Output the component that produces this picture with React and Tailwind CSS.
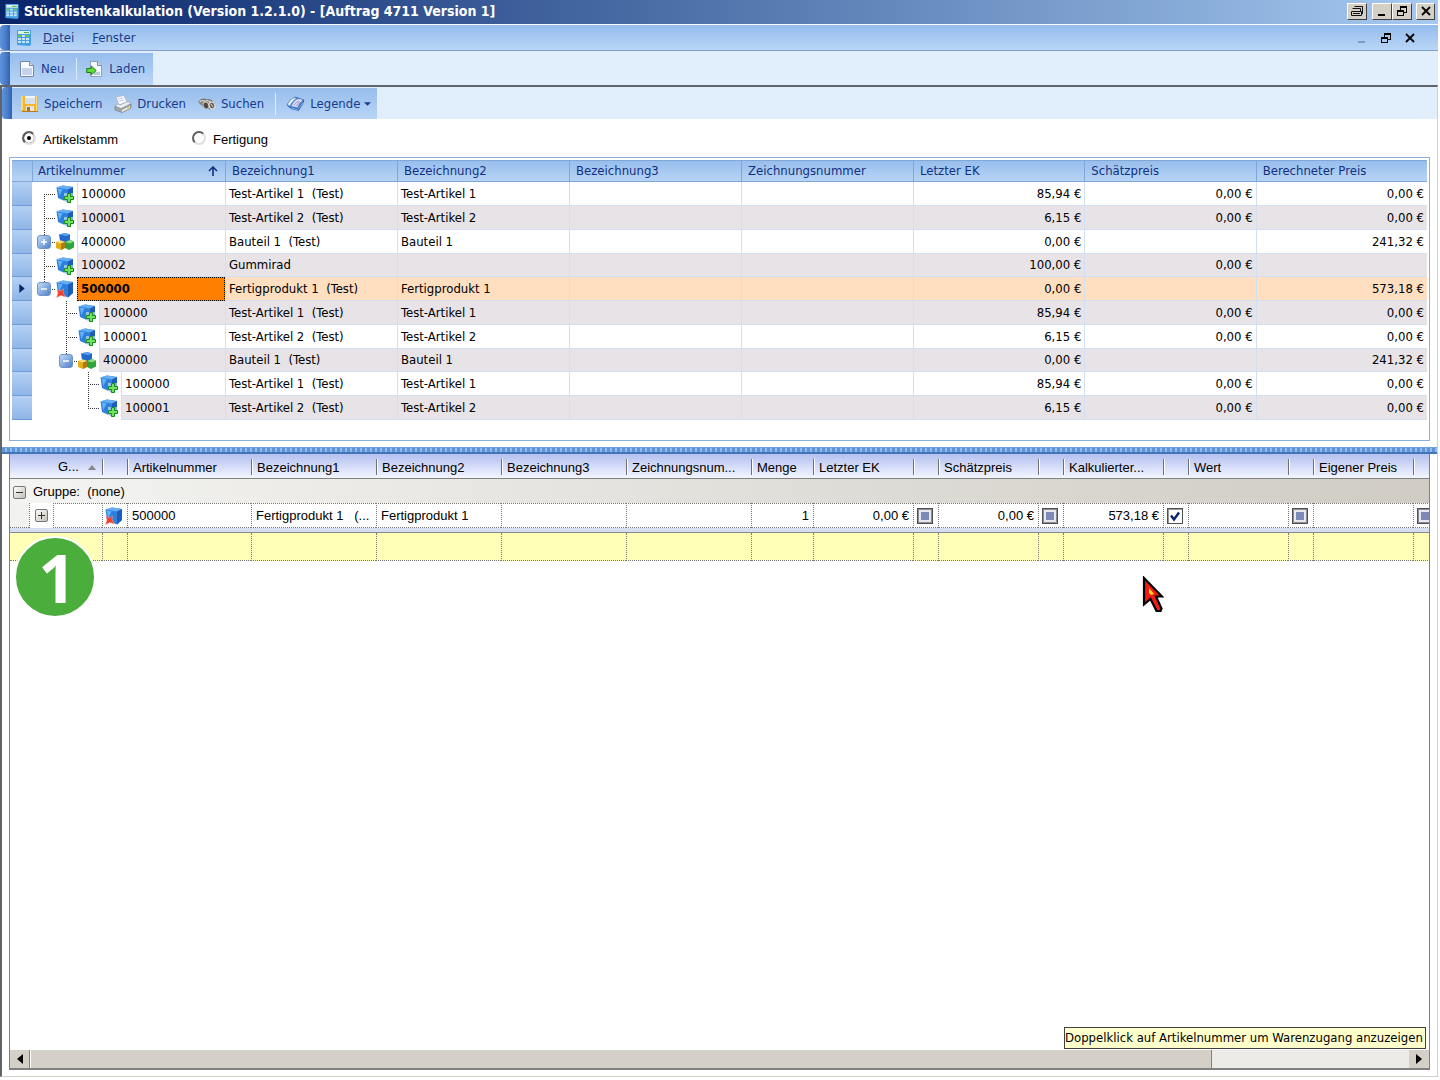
import React, { useState } from 'react';

const treeRows = [
  { level: 0, icon: 'cube', nr: '100000', b1: 'Test-Artikel 1  (Test)', b2: 'Test-Artikel 1', ek: '85,94 €', sp: '0,00 €', bp: '0,00 €', line: 'first' },
  { level: 0, icon: 'cube', nr: '100001', b1: 'Test-Artikel 2  (Test)', b2: 'Test-Artikel 2', ek: '6,15 €', sp: '0,00 €', bp: '0,00 €', line: 'mid' },
  { level: 0, icon: 'part', nr: '400000', b1: 'Bauteil 1  (Test)', b2: 'Bauteil 1', ek: '0,00 €', sp: '', bp: '241,32 €', line: 'mid', node: 'plus' },
  { level: 0, icon: 'cube', nr: '100002', b1: 'Gummirad', b2: '', ek: '100,00 €', sp: '0,00 €', bp: '', line: 'mid' },
  { level: 0, icon: 'product', nr: '500000', b1: 'Fertigprodukt 1  (Test)', b2: 'Fertigprodukt 1', ek: '0,00 €', sp: '', bp: '573,18 €', line: 'last', node: 'minus', selected: true },
  { level: 1, icon: 'cube', nr: '100000', b1: 'Test-Artikel 1  (Test)', b2: 'Test-Artikel 1', ek: '85,94 €', sp: '0,00 €', bp: '0,00 €', line: 'mid' },
  { level: 1, icon: 'cube', nr: '100001', b1: 'Test-Artikel 2  (Test)', b2: 'Test-Artikel 2', ek: '6,15 €', sp: '0,00 €', bp: '0,00 €', line: 'mid' },
  { level: 1, icon: 'part', nr: '400000', b1: 'Bauteil 1  (Test)', b2: 'Bauteil 1', ek: '0,00 €', sp: '', bp: '241,32 €', line: 'last', node: 'minus' },
  { level: 2, icon: 'cube', nr: '100000', b1: 'Test-Artikel 1  (Test)', b2: 'Test-Artikel 1', ek: '85,94 €', sp: '0,00 €', bp: '0,00 €', line: 'mid' },
  { level: 2, icon: 'cube', nr: '100001', b1: 'Test-Artikel 2  (Test)', b2: 'Test-Artikel 2', ek: '6,15 €', sp: '0,00 €', bp: '0,00 €', line: 'last' },
];

const treeHeaders = [
  { title: 'Bezeichnung1', width: 'w-[172px]' },
  { title: 'Bezeichnung2', width: 'w-[172px]' },
  { title: 'Bezeichnung3', width: 'w-[172px]' },
  { title: 'Zeichnungsnummer', width: 'w-[172px]' },
  { title: 'Letzter EK' },
  { title: 'Schätzpreis' },
  { title: 'Berechneter Preis' },
];

const calcColumns = [
  { width: 'w-[92px]', title: 'G...', sort: true },
  { width: 'w-[25px]', title: '' },
  { width: 'w-[124px]', title: 'Artikelnummer', value: '500000' },
  { width: 'w-[125px]', title: 'Bezeichnung1', value: 'Fertigprodukt 1   (...' },
  { width: 'w-[125px]', title: 'Bezeichnung2', value: 'Fertigprodukt 1' },
  { width: 'w-[125px]', title: 'Bezeichnung3', value: '' },
  { width: 'w-[125px]', title: 'Zeichnungsnum...', value: '' },
  { width: 'w-[62px]', title: 'Menge', value: '1', right: true },
  { width: 'w-[100px]', title: 'Letzter EK', value: '0,00 €', right: true },
  { width: 'w-[25px]', title: '', check: 'mixed', label: 'Letzter EK verwenden' },
  { width: 'w-[100px]', title: 'Schätzpreis', value: '0,00 €', right: true },
  { width: 'w-[25px]', title: '', check: 'mixed', label: 'Schätzpreis verwenden' },
  { width: 'w-[100px]', title: 'Kalkulierter...', value: '573,18 €', right: true },
  { width: 'w-[25px]', title: '', check: 'on', label: 'Kalkulierten Preis verwenden' },
  { width: 'w-[100px]', title: 'Wert', value: '' },
  { width: 'w-[25px]', title: '', check: 'mixed', label: 'Wert verwenden' },
  { width: 'w-[100px]', title: 'Eigener Preis', value: '' },
  { width: 'w-[25px]', title: '', check: 'mixed', label: 'Eigenen Preis verwenden' },
];

const CalculatorIcon = ({ className }) => (
  <svg viewBox="0 0 16 18" className={className} aria-hidden="true">
    <path d="M1 1h14v14l-1 2-13-1z" fill="#3fa0e6" />
    <path d="M2 2h12v3H2z" fill="#dcf3e4" />
    <path d="M8 3h5v1H8z" fill="#4aa84e" />
    <path d="M2 6h3v2H2zM6 6h3v2H6zM2 9h3v2H2zM6 9h3v2H6zM10 9h3v2h-3zM2 12h3v2H2zM6 12h3v2H6zM10 12h3v2h-3z" fill="#c4e6fa" />
    <path d="M10 6h3v2h-3zM2 6h3v2H2z" fill="#6cc36c" />
  </svg>
);

const PageIcon = () => (
  <svg viewBox="0 0 18 18" className="h-[18px] w-[18px]" aria-hidden="true">
    <path d="M2.500 1.500h9l4 4v11h-13z" fill="#f6f9fd" stroke="#7688a8" />
    <path d="M11.500 1.500v4h4" fill="#cfdcec" stroke="#7688a8" />
    <path d="M4 8h10v7H4z" fill="#c6d4ea" />
  </svg>
);

const LoadIcon = () => (
  <svg viewBox="0 0 18 18" className="h-[18px] w-[18px]" aria-hidden="true">
    <path d="M4.500 1.500h7l4 4v11h-11z" fill="#f4f8fc" stroke="#8fa0ba" />
    <path d="M11.500 1.500v4h4" fill="#cfdcec" stroke="#7688a8" />
    <path d="M8 12h6v3H8z" fill="#b9c9e0" />
    <path d="M.7 8.500h4.500V6l5 4.500-5 4.500v-2.500H.7z" fill="#5fdc38" stroke="#1f7a1c" />
  </svg>
);

const SaveIcon = () => (
  <svg viewBox="0 0 19 18" className="h-[18px] w-[19px]" aria-hidden="true">
    <path d="M1 1h17v16H3l-2-2z" fill="#f4b62c" />
    <path d="M1 1h2v14H1zM16 1h1v15h-1z" fill="#ffd868" />
    <path d="M5 1h10v8H5z" fill="#d4dff0" />
    <path d="M5 1h10v2H5z" fill="#f4f7fc" />
    <path d="M6 11h8v6H6z" fill="#e4e4e8" />
    <path d="M7 12h3v5H7z" fill="#a87818" />
    <path d="M2 16.500h16" stroke="#b47f1a" />
  </svg>
);

const PrintIcon = () => (
  <svg viewBox="0 0 18 18" className="h-[18px] w-[18px]" aria-hidden="true">
    <path d="M2 2l8-1.500L13 7l-8 3z" fill="#fbfcff" stroke="#a5adb8" strokeWidth=".7" />
    <path d="M4 4l5-1M5 6l5-1" stroke="#a8c4ec" strokeWidth=".8" />
    <path d="M1 11l6 3 10-5v4L8 17.500 1 15z" fill="#a3a6ac" stroke="#777c84" strokeWidth=".7" />
    <path d="M1 11l3-2 2 1 8-3.500 3 2L7 13.500z" fill="#eceef1" stroke="#8a9098" strokeWidth=".5" />
    <path d="M8 15l8-4v2l-8 4z" fill="#f2edd2" />
    <circle cx="14" cy="12.500" r="1" fill="#e0bf2c" />
  </svg>
);

const SearchIcon = () => (
  <svg viewBox="0 0 18 18" className="h-[18px] w-[18px]" aria-hidden="true">
    <path d="M.5 7Q2 4 6 4l7 1 4 4-4 5-6-1z" fill="#8c8580" stroke="#645e5a" strokeWidth=".7" />
    <path d="M1.500 7Q4 5 7 6l3 3M8 5l5 2" fill="none" stroke="#d8d2cc" strokeWidth="1.200" />
    <ellipse cx="8" cy="10.500" rx="2.800" ry="3.500" fill="#4f4a47" stroke="#c8c4be" transform="rotate(-20 8 10.500)" />
    <ellipse cx="14" cy="10.500" rx="2.800" ry="3.500" fill="#6a6460" stroke="#f0ece6" transform="rotate(-20 14 10.500)" />
    <path d="M13 9l2 3" stroke="#c8d0dc" />
  </svg>
);

const LegendIcon = () => (
  <svg viewBox="0 0 19 18" className="h-[18px] w-[19px]" aria-hidden="true">
    <path d="M1 10q2-5 8-8l9 3-6 10-8-2z" fill="#3f86d8" stroke="#2a5ba8" strokeWidth=".7" />
    <path d="M1.500 9.500Q4 4 9 2.500l1 1Q5 7 4 11z" fill="#f3f7fd" stroke="#6b8fc4" strokeWidth=".5" />
    <path d="M5 11.500Q7 6 11 4q3-1 6 1-4 3-5.500 8-3-1.500-6.500-1.500z" fill="#dcd8f4" stroke="#4a74b8" strokeWidth=".5" />
    <path d="M8 10l4-4M10.500 11l3-5" stroke="#9f92d4" strokeWidth=".9" />
    <path d="M12 13l6-8v2.500L12.500 16 5 14v-1.500z" fill="#2a62b8" />
    <path d="M12 14l5.500-7M5.500 13l6.500 2" stroke="#e4effc" strokeWidth=".6" />
  </svg>
);

const CubeBody = () => (
  <>
    <path d="M.5 2.500L7 .5l10 1.500v11l-5 4.500L2 13z" fill="#2f80dc" />
    <path d="M.5 2.500L7 .5l10 1.500-5 2.500z" fill="#66aef4" />
    <path d="M12 4.500L17 2v11l-5 4.500z" fill="#1d5cb8" />
    <path d="M1.500 3.500l5 .7L3.500 11z" fill="#62b2f8" />
  </>
);

const ArticleIcon = ({ type }) => {
  if (type === 'part') {
    return (
      <svg viewBox="0 0 18 18" className="h-[18px] w-[18px]" aria-hidden="true">
        <path d="M3 1.500L9 0l5 1.500v6.500L9 10 4 8z" fill="#2468cc" />
        <path d="M3 1.500L9 0l5 1.500L10 3z" fill="#5aa4f4" />
        <path d="M0 9l5-1.500L9 9v6l-4 2-5-2z" fill="#e2ae1c" />
        <path d="M0 9l5-1.500L9 9l-4 1.500z" fill="#fbe27c" />
        <path d="M5 10.500L9 9v6l-4 2z" fill="#b07c10" />
        <path d="M9 9l5-2 4 1.500v6L13 17l-4-2z" fill="#2fa43a" />
        <path d="M9 9l5-2 4 1.500-4 2z" fill="#84dc7c" />
      </svg>
    );
  }
  return (
    <svg viewBox="0 0 18 18" className="h-[18px] w-[18px]" aria-hidden="true">
      <CubeBody />
      {type === 'product' ? (
        <path d="M1 9l3 2 3.500-2L7 12.500 9.500 17 5 15.500 .5 17.500 2 13z" fill="#f0402c" stroke="#f8a898" strokeWidth=".5" />
      ) : (
        <>
          <path d="M8 8h10v10H8z" fill="#e8f4f4" opacity=".55" />
          <path d="M11.500 8.500h3v3h3v3h-3v3h-3v-3h-3v-3h3z" fill="#6fe060" stroke="#128a1c" />
        </>
      )}
    </svg>
  );
};

const TreeNode = ({ line, node }) => (
  <span className="relative flex h-6 w-6 shrink-0 items-center justify-center">
    <svg viewBox="0 0 24 24" className="absolute inset-0 h-6 w-6" aria-hidden="true" shapeRendering="crispEdges">
      <path
        d={line === 'first' ? 'M12.500 12V24' : line === 'last' ? 'M12.500 0V12' : 'M12.500 0V24'}
        stroke="#333"
        strokeDasharray="1 1"
      />
      <path d="M12 12.500H24" stroke="#333" strokeDasharray="1 1" />
    </svg>
    {node && (
      <button
        aria-label={node === 'plus' ? 'Aufklappen' : 'Zuklappen'}
        className="relative flex h-[14px] w-[14px] items-center justify-center rounded-[3px] border border-[#6f94cc] bg-gradient-to-br from-[#c4dbf8] to-[#4f82c8]"
      >
        <svg viewBox="0 0 8 8" className="h-2 w-2" aria-hidden="true">
          <path d={node === 'plus' ? 'M1 4h6M4 1v6' : 'M1 4h6'} stroke="#fff" strokeWidth="1.400" />
        </svg>
      </button>
    )}
  </span>
);

const ToolButton = ({ icon, children }) => (
  <button className="flex items-center gap-[5px] whitespace-nowrap text-[#173a8e]">
    {icon}
    <span>{children}</span>
  </button>
);

const Grip = ({ className }) => (
  <span className={`shrink-0 rounded-l-sm bg-gradient-to-r from-[#5f93dc] via-[#4c80cc] to-[#2f62b0] ${className}`}></span>
);

const CaptionButton = ({ label, className, children }) => (
  <button
    aria-label={label}
    className={`flex h-[17px] items-center justify-center border border-t-white border-l-white border-r-[#404040] border-b-[#404040] bg-[#d4d0c8] ${className}`}
  >
    {children}
  </button>
);

const RestoreGlyph = () => (
  <svg viewBox="0 0 12 12" className="h-3 w-3" aria-hidden="true" shapeRendering="crispEdges">
    <path d="M4 1h7v2H4zM4 3h1v2H4zM10 3h1v5H10zM8 7h2v1H8zM1 5h7v2H1zM1 7h1v4H1zM7 7h1v4H7zM1 10h7v1H1z" fill="#000" />
  </svg>
);

const CloseGlyph = () => (
  <svg viewBox="0 0 12 12" className="h-3 w-3" aria-hidden="true">
    <path d="M2 2l8 8M10 2l-8 8" stroke="#000" strokeWidth="1.800" />
  </svg>
);

const MinGlyph = ({ color }) => (
  <svg viewBox="0 0 12 12" className="h-3 w-3" aria-hidden="true" shapeRendering="crispEdges">
    <path d="M2 9h7v2H2z" fill={color} />
  </svg>
);

const TitleBar = () => (
  <header className="flex h-6 items-center bg-gradient-to-r from-[#0a246a] to-[#a6caf0] pr-[3px] pb-[2px] pl-1">
    <CalculatorIcon className="h-[17px] w-4" />
    <h1 className="ml-1 flex-1 text-[14px] font-bold whitespace-nowrap text-white">
      Stücklistenkalkulation (Version 1.2.1.0) - [Auftrag 4711 Version 1]
    </h1>
    <CaptionButton label="Fenster andocken" className="mr-[5px] w-5">
      <svg viewBox="0 0 14 12" className="h-3 w-[14px]" aria-hidden="true">
        <path d="M4.500 1.500h8v3M2.500 3.500h8v3M1.500 6.500h10v4h-10zM3 8.500h7" fill="none" stroke="#111" />
        <path d="M12.500 4v5" stroke="#111" />
      </svg>
    </CaptionButton>
    <CaptionButton label="Minimieren" className="w-5">
      <MinGlyph color="#000" />
    </CaptionButton>
    <CaptionButton label="Wiederherstellen" className="mr-1 w-5">
      <RestoreGlyph />
    </CaptionButton>
    <CaptionButton label="Schließen" className="w-[19px]">
      <CloseGlyph />
    </CaptionButton>
  </header>
);

const MenuBar = () => (
  <nav className="flex h-[27px] border-t border-b border-t-white border-b-[#7f9fc8]">
    <Grip className="w-[10px]" />
    <div className="flex flex-1 items-center bg-gradient-to-b from-[#94bcec] to-[#b9d5f6] pr-[22px] pl-[6px] text-[#173a8e]">
      <CalculatorIcon className="h-[18px] w-4" />
      <button className="ml-[11px]"><u>D</u>atei</button>
      <button className="ml-[18px]"><u>F</u>enster</button>
      <div className="ml-auto flex items-center gap-3">
        <button aria-label="Dokument minimieren"><MinGlyph color="#7e9cc8" /></button>
        <button aria-label="Dokument wiederherstellen"><RestoreGlyph /></button>
        <button aria-label="Dokument schließen"><CloseGlyph /></button>
      </div>
    </div>
  </nav>
);

const TreeGrid = () => (
  <section className="mx-[7px] h-[284px] border border-[#8cb0d8] pt-[2px] pr-[2px] pl-[2px]">
    <table className="w-full table-fixed border-separate border-spacing-0">
      <colgroup>
        <col className="w-5" />
        <col className="w-[193px]" />
        {treeHeaders.map((h) => (
          <col key={h.title} className={h.width} />
        ))}
      </colgroup>
      <thead>
        <tr className="h-[22px] bg-gradient-to-b from-[#96bdec] to-[#b9d5f6] text-left text-[#12307f]">
          <th aria-label="Zeile" className="border-t border-b border-[#7fa8d8] p-0"></th>
          <th className="border-t border-b border-l border-[#7fa8d8] p-0 pr-[7px] pl-[5px] font-normal">
            <div className="flex items-center justify-between">
              Artikelnummer
              <svg viewBox="0 0 10 10" className="h-[10px] w-[10px]" aria-hidden="true">
                <path d="M5 1v9M1 5l4-4 4 4" fill="none" stroke="#12307f" strokeWidth="1.600" />
              </svg>
            </div>
          </th>
          {treeHeaders.map((h) => (
            <th key={h.title} className="truncate border-t border-b border-l border-[#7fa8d8] p-0 pl-[6px] font-normal">
              {h.title}
            </th>
          ))}
        </tr>
      </thead>
      <tbody>
        {treeRows.map((row, i) => {
          const bg = row.selected ? 'bg-[#ffdfbf]' : i % 2 ? 'bg-[#e7e3e7]' : 'bg-white';
          // every fourth row is one pixel shorter
          const height = i % 4 === 3 ? 'h-[23px]' : 'h-6';
          const cell = `border-b border-l border-[#d3e0f2] p-0 px-[3px] whitespace-pre ${bg}`;
          return (
            <tr key={i} className={height}>
              <td className="border-b border-[#6f9cd4] bg-gradient-to-b from-[#b4d0f4] to-[#8fb6e8] p-0">
                {row.selected && (
                  <svg viewBox="0 0 6 10" className="mx-auto h-[9px] w-[6px]" aria-label="Aktuelle Zeile">
                    <path d="M0 0l6 5-6 5z" fill="#0a246a" />
                  </svg>
                )}
              </td>
              <td className="p-0">
                <div className={`flex overflow-hidden ${height}`}>
                  {row.level > 0 && <span className={row.level === 1 ? 'w-[22px] shrink-0' : 'w-11 shrink-0'}></span>}
                  <TreeNode line={row.line} node={row.node} />
                  <span className="flex w-[21px] shrink-0 items-center"><ArticleIcon type={row.icon} /></span>
                  <span
                    className={`flex flex-1 items-center pl-[3px] ${
                      row.selected
                        ? 'border border-dotted border-black bg-[#ff8000] font-bold'
                        : `border-b border-l border-[#d3e0f2] ${bg}`
                    }`}
                  >
                    {row.nr}
                  </span>
                </div>
              </td>
              <td className={cell}>{row.b1}</td>
              <td className={cell}>{row.b2}</td>
              <td className={cell}></td>
              <td className={cell}></td>
              <td className={`text-right ${cell}`}>{row.ek}</td>
              <td className={`text-right ${cell}`}>{row.sp}</td>
              <td className={`text-right ${cell}`}>{row.bp}</td>
            </tr>
          );
        })}
      </tbody>
    </table>
  </section>
);

const PriceCheck = ({ state, label }) => (
  <span className="relative ml-[3px] block h-4 w-4">
    <input
      type="checkbox"
      aria-label={label}
      defaultChecked={state === 'on'}
      className={`block h-4 w-4 appearance-none border border-[#505050] ${
        state === 'on' ? 'bg-white shadow-[inset_1px_1px_0_#999]' : 'bg-[#7d8ab8] shadow-[inset_0_0_0_1px_#8c8c94,inset_0_0_0_3px_#e6e8f2]'
      }`}
    />
    {state === 'on' && (
      <svg viewBox="0 0 16 16" className="pointer-events-none absolute inset-0 h-4 w-4" aria-hidden="true">
        <path d="M4 7.500l3 4 5-7" fill="none" stroke="#0a246a" strokeWidth="2.400" />
      </svg>
    )}
  </span>
);

const ExpandBox = ({ plus, label }) => (
  <button
    aria-label={label}
    className="flex h-[13px] w-[13px] shrink-0 items-center justify-center rounded-xs border border-[#777] bg-gradient-to-br from-white to-[#c4c0b8]"
  >
    <svg viewBox="0 0 7 7" className="h-[7px] w-[7px]" aria-hidden="true" shapeRendering="crispEdges">
      <path d={plus ? 'M0 3h7v1H0zM3 0h1v7H3z' : 'M0 3h7v1H0z'} fill="#333" />
    </svg>
  </button>
);

const CalcGrid = () => (
  <div className="overflow-hidden font-['Liberation_Sans',Arial,sans-serif]">
    <table className="w-[1428px] table-fixed border-separate border-spacing-0">
      <colgroup>
        {calcColumns.map((c, i) => (
          <col key={i} className={c.width} />
        ))}
      </colgroup>
      <thead>
        <tr className="h-[25px] bg-gradient-to-b from-[#b4c0f0] to-[#f6f8ff] text-left">
          {calcColumns.map((c, i) => (
            <th key={i} className="border-b border-[#808080] p-0 pt-[2px] font-normal">
              {c.sort ? (
                <div className="flex items-center gap-2 pl-12">
                  {c.title}
                  <svg viewBox="0 0 10 6" className="h-[5px] w-[10px]" aria-hidden="true">
                    <path d="M5 0l5 6H0z" fill="#8a8a8a" />
                  </svg>
                </div>
              ) : (
                <div className="h-4 overflow-hidden border-l border-[#707070] pl-[5px] leading-[18px] whitespace-nowrap shadow-[inset_1px_0_0_#fff]">
                  {c.title}
                </div>
              )}
            </th>
          ))}
        </tr>
      </thead>
      <tbody>
        <tr>
          <td colSpan={18} className="h-6 bg-gradient-to-r from-[#f4f4f2] to-[#d0ccc4] p-0 pt-[2px] pl-[3px]">
            <div className="flex items-center gap-[7px] whitespace-pre">
              <ExpandBox label="Gruppe zuklappen" />
              <span>Gruppe:  (none)</span>
            </div>
          </td>
        </tr>
        <tr>
          <td className="p-0">
            <div className="flex h-[25px]">
              <span className="w-[19px] border-b border-dotted border-[#777] bg-[#f2f2f0]"></span>
              <span className="flex w-6 items-center justify-center border-l border-dotted border-[#777]">
                <ExpandBox plus label="Zeile aufklappen" />
              </span>
              <span className="flex-1 border border-r-0 border-dotted border-[#777]"></span>
            </div>
          </td>
          <td className="border-t border-b border-l border-dotted border-[#777] p-0">
            <span className="ml-[2px] block"><ArticleIcon type="product" /></span>
          </td>
          {calcColumns.slice(2).map((c, i) => (
            <td
              key={i}
              className={`overflow-hidden border-t border-b border-l border-dotted border-[#777] p-0 whitespace-pre ${
                c.right ? 'pr-1 text-right' : c.check ? '' : 'pl-1'
              }`}
            >
              {c.check ? <PriceCheck state={c.check} label={c.label} /> : c.value}
            </td>
          ))}
        </tr>
        <tr>
          <td colSpan={18} className="h-[5px] border-b border-[#808890] bg-[#d6dff0] p-0"></td>
        </tr>
        <tr>
          {calcColumns.map((c, i) => (
            <td
              key={i}
              className={`h-7 border-b border-dotted border-[#777] bg-[#ffffb8] p-0 ${i > 0 ? 'border-l' : ''}`}
            ></td>
          ))}
        </tr>
      </tbody>
    </table>
  </div>
);

const ScrollBar = () => (
  <div className="flex h-[18px]">
    <button aria-label="Nach links" className="flex w-5 items-center justify-center border-r border-[#808080] bg-[#d4d0c8]">
      <svg viewBox="0 0 6 10" className="h-[10px] w-[6px]" aria-hidden="true"><path d="M6 0v10L0 5z" /></svg>
    </button>
    <div className="flex-1 border-r border-l border-l-white border-r-[#808080] bg-[#d4d0c8]"></div>
    <div className="w-[197px] bg-[#ecebe8]"></div>
    <button aria-label="Nach rechts" className="flex w-5 items-center justify-center bg-[#d4d0c8]">
      <svg viewBox="0 0 6 10" className="h-[10px] w-[6px]" aria-hidden="true"><path d="M0 0v10l6-5z" /></svg>
    </button>
  </div>
);

const StepBadge = () => (
  <div className="absolute top-[82px] left-1 flex h-[82px] w-[82px] items-center justify-center rounded-full border-2 border-white bg-[#4bae3c] pl-1 font-['Open_Sans',sans-serif] text-[66px] leading-none font-bold text-white">
    1
  </div>
);

const Cursor = () => (
  <svg viewBox="0 0 22 38" className="absolute top-[122px] right-[265px] h-[38px] w-[22px]" aria-hidden="true">
    <path d="M2 2l18 18.500h-6l5.500 12-1 2.500h-4L8.500 23 2 28.500z" fill="#ee1c14" stroke="#000" strokeWidth="2.200" />
    <path d="M7 12l5 6-3 1-2-2z" fill="#ffd820" />
  </svg>
);

export default function App() {
  const [mode, setMode] = useState('stamm');
  const radio =
    'h-[14px] w-[14px] appearance-none rounded-full border-2 border-t-[#606060] border-l-[#606060] border-r-[#e0e0e0] border-b-[#e0e0e0] bg-white checked:bg-black checked:shadow-[inset_0_0_0_3px_#fff]';

  return (
    <div className="flex min-h-screen flex-col bg-white pr-[2px] font-['DejaVu_Sans_Condensed','DejaVu_Sans',sans-serif] text-[13px] leading-4 text-black">
      <TitleBar />
      <MenuBar />

      <div className="flex h-[34px] bg-[#e1effd]">
        <Grip className="mt-px w-[10px]" />
        <div className="mt-[2px] flex items-center bg-gradient-to-b from-[#96bdec] to-[#b9d5f6] px-2">
          <ToolButton icon={<PageIcon />}>Neu</ToolButton>
          <span className="mr-[9px] ml-3 h-[22px] w-px bg-[#dcebfd]"></span>
          <ToolButton icon={<LoadIcon />}>Laden</ToolButton>
        </div>
      </div>

      <main className="mb-[3px] flex flex-1 flex-col border-t-2 border-r border-b border-l-2 border-t-[#606468] border-r-[#d4d0c8] border-b-[#d4d0c8] border-l-[#606468]">
        <div className="flex h-8 bg-[#e1effd]">
          <Grip className="w-[10px]" />
          <div className="mt-px flex items-center bg-gradient-to-b from-[#96bdec] to-[#b9d5f6] pr-[6px] pl-2">
            <ToolButton icon={<SaveIcon />}>Speichern</ToolButton>
            <span className="w-3"></span>
            <ToolButton icon={<PrintIcon />}>Drucken</ToolButton>
            <span className="w-3"></span>
            <ToolButton icon={<SearchIcon />}>Suchen</ToolButton>
            <span className="mr-[10px] ml-[11px] h-[22px] w-px bg-[#dcebfd]"></span>
            <ToolButton icon={<LegendIcon />}>Legende</ToolButton>
            <svg viewBox="0 0 8 4" className="ml-1 h-1 w-[7px]" aria-hidden="true"><path d="M0 0h8L4 4z" fill="#173a8e" /></svg>
          </div>
        </div>

        <div className="flex h-[38px] items-center pl-5 font-['Liberation_Sans',Arial,sans-serif]">
          <label className="flex w-[170px] items-center gap-[7px]">
            <input type="radio" name="mode" className={radio} checked={mode === 'stamm'} onChange={() => setMode('stamm')} />
            <span className="pt-[3px]">Artikelstamm</span>
          </label>
          <label className="flex items-center gap-[7px]">
            <input type="radio" name="mode" className={radio} checked={mode === 'fertigung'} onChange={() => setMode('fertigung')} />
            <span className="pt-[3px]">Fertigung</span>
          </label>
        </div>

        <TreeGrid />

        <div className="mt-[6px] h-[7px] border-t border-b-2 border-t-[#6f9fdc] border-b-[#4474b8] bg-[repeating-linear-gradient(90deg,#5f94d4_0_3px,#92bcec_3px_5px)]"></div>

        <section className="relative mr-[7px] mb-[6px] ml-[7px] flex flex-1 flex-col border-r border-b-2 border-l border-[#808080]">
          <CalcGrid />
          <div className="flex-1"></div>
          <ScrollBar />
          <StepBadge />
          <Cursor />
          <div role="tooltip" className="absolute right-[3px] bottom-[19px] flex h-[22px] w-[362px] items-center border border-[#404040] bg-[#ffffcc] whitespace-nowrap">
            Doppelklick auf Artikelnummer um Warenzugang anzuzeigen
          </div>
        </section>
      </main>
    </div>
  );
}
